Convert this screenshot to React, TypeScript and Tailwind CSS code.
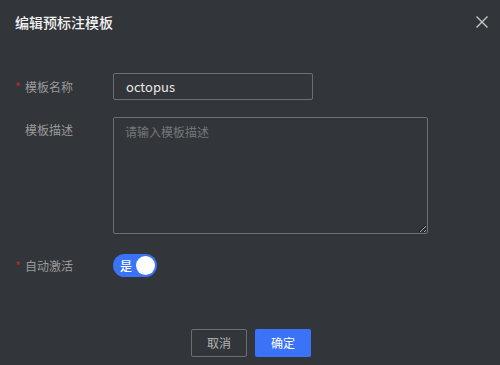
import React from "react";

export default function App() {
  const font = { fontFamily: '"Noto Sans CJK SC", "Noto Sans", sans-serif' };
  return (
    <div className="w-[500px] h-[365px] bg-[#323539] flex flex-col" style={font}>
      <div className="h-[44px] flex items-center justify-between pl-[15px] pr-[12px]">
        <span className="text-[14px] text-[#f2f2f2] font-medium leading-none">编辑预标注模板</span>
        <svg width="12" height="12" viewBox="0 0 12 12" className="text-[#c8c8c8]">
          <path d="M0.5 0.5 L11.5 11.5 M11.5 0.5 L0.5 11.5" stroke="currentColor" strokeWidth="1.4" />
        </svg>
      </div>
      <div className="flex flex-col pt-[29px] pl-[15px]">
        <div className="flex items-center h-[27px]">
          <div className="w-[98px] flex items-center text-[12px] text-[#9a9a9a]">
            <span className="text-[#c0262d] w-[10px] leading-none">*</span>
            <span>模板名称</span>
          </div>
          <div className="w-[200px] h-[27px] border border-[#6b6e72] rounded-[2px] flex items-center pl-[12px] text-[13px] text-[#e8e8e8]">
            octopus
          </div>
        </div>
        <div className="flex mt-[17px]">
          <div className="w-[98px] pt-[4px] flex text-[12px] text-[#9a9a9a]">
            <span className="w-[10px]"></span>
            <span>模板描述</span>
          </div>
          <textarea
            placeholder="请输入模板描述"
            className="w-[315px] h-[117px] bg-transparent border border-[#6b6e72] rounded-[2px] px-[11px] py-[5px] text-[12px] text-[#e8e8e8] placeholder:text-[#74777b] outline-none"
            style={font}
          />
        </div>
        <div className="flex items-center mt-[20px] h-[23px]">
          <div className="w-[98px] flex items-center text-[12px] text-[#9a9a9a]">
            <span className="text-[#c0262d] w-[10px] leading-none">*</span>
            <span>自动激活</span>
          </div>
          <div className="w-[44px] h-[23px] rounded-full bg-[#3a72f8] flex items-center justify-between pl-[7px] pr-[2px]">
            <span className="text-[12px] text-white font-medium leading-none">是</span>
            <span className="w-[19px] h-[19px] rounded-full bg-white"></span>
          </div>
        </div>
      </div>
      <div className="flex justify-center gap-[8px] mt-[52px] pl-[2px]">
        <button className="w-[56px] h-[28px] border border-[#6b6e72] rounded-[2px] text-[12px] text-[#b5b5b5]" style={font}>取消</button>
        <button className="w-[56px] h-[28px] rounded-[2px] bg-[#3a72f8] text-[12px] text-white" style={font}>确定</button>
      </div>
    </div>
  );
}
